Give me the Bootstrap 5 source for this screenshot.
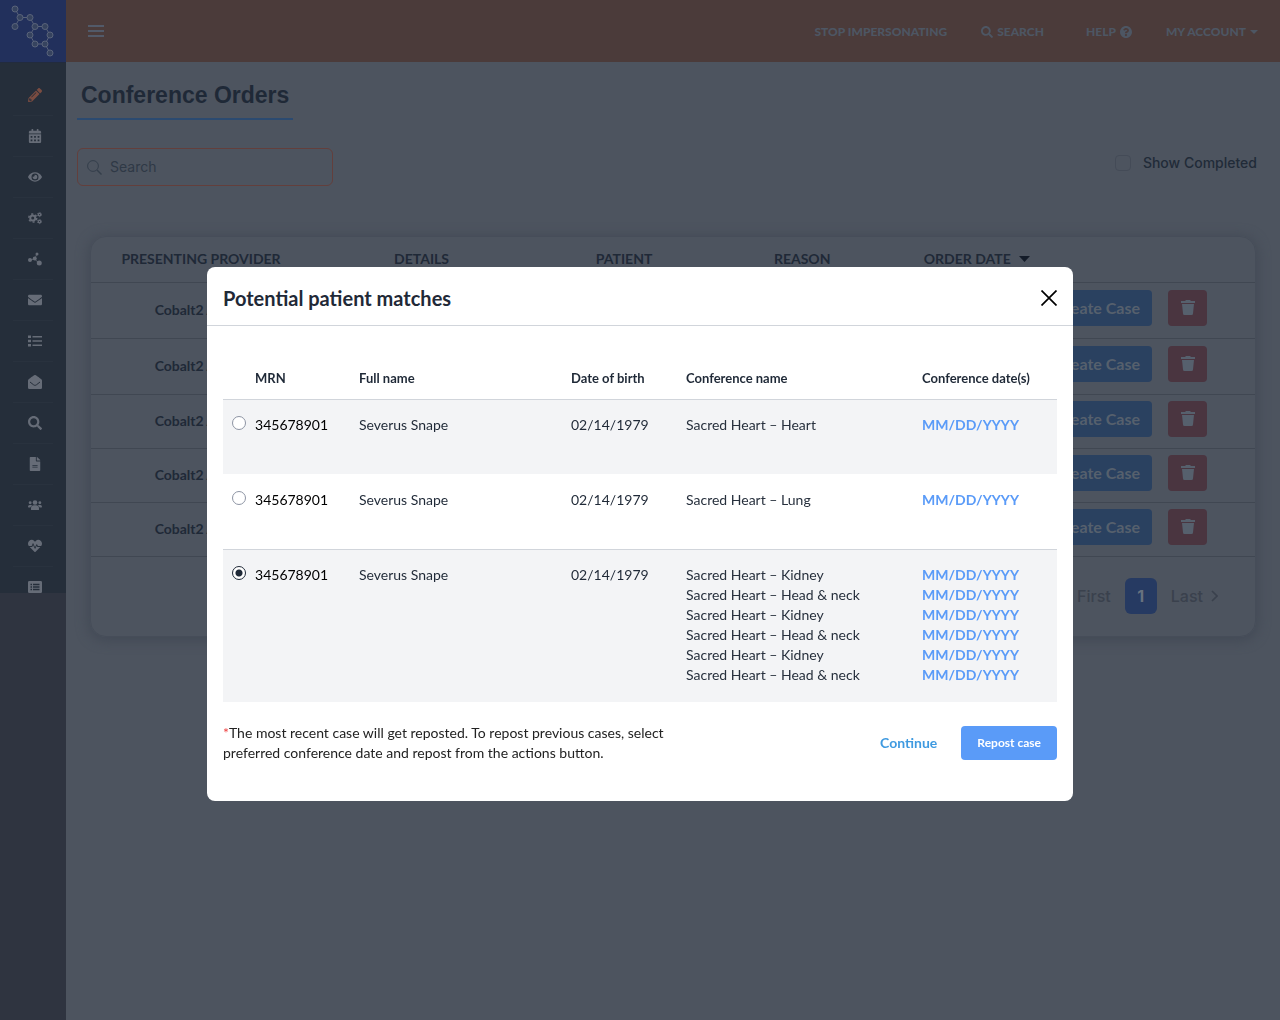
<!DOCTYPE html>
<html lang="en">
<head>
<meta charset="utf-8">
<meta name="viewport" content="width=device-width, initial-scale=1">
<title>Conference Orders</title>
<link rel="stylesheet" href="https://cdn.jsdelivr.net/npm/bootstrap@5.3.0/dist/css/bootstrap.min.css">
<style>
body{font-family:Lato,"Liberation Sans",sans-serif;background:#4d545f;color:#1f2937;font-size:14px;line-height:20px}
a{text-decoration:none}
svg{display:block;flex:none}
.inter{font-family:Inter,"Liberation Sans",sans-serif}
.side{width:66px;flex:none;background:#2f3440}
.brand{height:62px;background:#22305c;display:block}
.side-list{height:531px;overflow:hidden;background:#252e3a;padding:12px 13px 0;margin:0;list-style:none;border-top:1px solid #222b3e}
.side-list li{border-bottom:1px solid #29323e}
.side-list a{height:40px;display:flex;align-items:center;justify-content:center;color:#666c77;padding-left:4px}
.side-list a.on{color:#7a4c41}
.side-list svg{width:14px;height:14px;fill:currentColor}
.topbar{height:62px;background:#4b3b3a;padding:0 22px}
.topbar nav{padding-top:2px;gap:34px}
.topbar a,.topbar button{color:#4d5663;font-size:12px;font-weight:900;line-height:16px}
.topbar button{background:none;border:0;padding:0}
.burger i{display:block;width:16px;height:2px;background:#525a69;margin-bottom:3px}
.burger i:last-child{margin-bottom:0}
.content-area{padding:17px 11px 0}
.page-title{font-family:"Liberation Sans",Arial,sans-serif;font-size:23px;line-height:32px;font-weight:700;color:#1f2937;padding:0 4px 7px;margin:0;border-bottom:2px solid #2b4a70}
.find{width:256px;height:38px;border:1px solid #633f3c;border-radius:6px;padding:0 9px;gap:8px}
.find input{background:none;border:0;outline:0;padding:0;width:190px;font-size:14px;color:#2c3643}
.find input::placeholder{color:#2f3946;opacity:1}
.done input{appearance:none;width:16px;height:16px;border:1px solid #444b57;border-radius:4px;margin:0}
.done{font-weight:500;color:#212b38;gap:12px;margin:5px 12px 0 0}
.orders{border:1px solid #464d59;border-radius:16px;box-shadow:0 2px 12px 2px #434a56;margin:50px 13px 0}
.orders table{width:100%;table-layout:fixed;text-align:center;border-collapse:collapse}
.orders th{font-weight:700;height:45px;padding:0}
.orders td{font-weight:700;height:54px;padding:0}
.orders td:last-child{padding-bottom:4px}
.orders tbody tr:nth-child(-n+2) td{height:56px}
.orders tr{border-bottom:1px solid #404752}
.btn-make,.btn-del{height:36px;border:0;border-radius:4px;background:#2a4160;color:#56606d;font-size:16px;font-weight:700;padding:0 12px;flex:none}
.btn-del{width:39px;background:#4a3540;padding:0 0 2px;display:flex;align-items:center;justify-content:center}
.pager{padding:21px 37px 22px;gap:14px;font-size:16px;font-weight:500}
.pager a{color:#3a414d}
.pager .cur{width:32px;height:36px;border-radius:6px;background:#263a62;color:#68717f;font-weight:700}
.match-box{max-width:866px;margin:267px auto 0}
.match-box .modal-content{border:0;border-radius:8px;background:#fff;color:#1f2937}
.match-box .modal-header{height:59px;padding:3px 16px 0;border-bottom:1px solid #d1d5db}
.match-box h2{font-size:20px;line-height:28px;font-weight:700;margin:0}
.x-btn{background:none;border:0;padding:0}
.match-box .modal-body{padding:0 16px 38px}
.hits{width:100%;table-layout:fixed;margin-top:32px;border-collapse:separate;border-spacing:0}
.hits th{font-size:13px;font-weight:700;height:41px;padding:0 0 2px;vertical-align:middle}
.hits td{padding:15px 0 39px;vertical-align:top;border-top:1px solid #fff}
.hits tr.tint td{background:#f3f4f6;border-top-color:#d1d5db}
.hits tr.last-hit td{padding-bottom:17px}
.hits a{color:#5a9bf8;font-weight:700;display:block}
.hits label{color:#000}
.hits span{display:block;color:#27303d}
.pick{appearance:none;width:14px;height:14px;border:1px solid #8d94a3;border-radius:50%;margin:1px 0 0 9px;display:block;background:#fff}
.pick:checked{border-color:#1f2937;background:radial-gradient(circle,#1f2937 3px,#fff 4px)}
.note{max-width:460px;margin:0;color:#222}
.note b{color:#ef4444;font-weight:400}
.hit-actions{margin-top:21px}
.go-on{color:#3f9ae0;font-weight:700}
.repost{height:34px;border:0;border-radius:4px;background:#5a9bf8;color:#fff;font-size:12px;font-weight:700;padding:0 16px}
</style>
<script src="https://cdn.jsdelivr.net/npm/bootstrap@5.3.0/dist/js/bootstrap.bundle.min.js"></script>
</head>
<body>
<div class="d-flex min-vh-100">
  <aside class="side">
    <a class="brand" href="#" aria-label="Home">
      <svg width="66" height="62" viewBox="0 0 66 62" fill="#36435f" stroke="#59637a"><path fill="none" d="M15 9l5 8.500-5 9M20 17.500h10l5 9h10l5 8.500-5 9H35l-5-9 5-8.500M45 44l5 9"/><circle cx="15" cy="9" r="3"/><circle cx="20" cy="17.500" r="3"/><circle cx="15" cy="26.500" r="3"/><circle cx="30" cy="17.500" r="3"/><circle cx="35" cy="26.500" r="3"/><circle cx="45" cy="26.500" r="3"/><circle cx="30" cy="35" r="3"/><circle cx="50" cy="35" r="3"/><circle cx="35" cy="44" r="3"/><circle cx="45" cy="44" r="3"/><circle cx="50" cy="53" r="3"/></svg>
    </a>
    <ul class="side-list">
      <li><a class="on" href="#" aria-label="Edit"><svg viewBox="0 0 512 512"><path d="M497.900 142.100l-46.100 46.100c-4.700 4.700-12.300 4.700-17 0l-111-111c-4.700-4.700-4.700-12.300 0-17l46.100-46.100c18.700-18.700 49.100-18.700 67.900 0l60.100 60.100c18.800 18.700 18.800 49.100 0 67.900zM284.200 99.800L21.600 362.400.4 483.900c-2.900 16.400 11.400 30.600 27.800 27.800l121.500-21.300 262.600-262.600c4.700-4.700 4.700-12.300 0-17l-111-111c-4.800-4.700-12.400-4.700-17.100 0zM124.100 339.900c-5.500-5.500-5.500-14.300 0-19.800l154-154c5.500-5.500 14.300-5.500 19.800 0s5.500 14.300 0 19.800l-154 154c-5.500 5.500-14.300 5.500-19.800 0zM88 424h48v36.300l-64.500 11.300-31.100-31.100L51.700 376H88v48z"/></svg></a></li>
      <li><a href="#" aria-label="Calendar"><svg viewBox="0 0 448 512"><path fill-rule="evenodd" d="M0 464c0 26.500 21.500 48 48 48h352c26.500 0 48-21.500 48-48V192H0v272zM64 256h64v64H64zM192 256h64v64h-64zM320 256h64v64h-64zM64 384h64v64H64zM192 384h64v64h-64zM320 384h64v64h-64zM400 64h-48V16c0-8.800-7.200-16-16-16h-32c-8.800 0-16 7.200-16 16v48H160V16c0-8.800-7.200-16-16-16h-32c-8.800 0-16 7.200-16 16v48H48C21.500 64 0 85.500 0 112v48h448v-48c0-26.500-21.500-48-48-48z"/></svg></a></li>
      <li><a href="#" aria-label="View"><svg viewBox="0 0 576 512"><path d="M572.520 241.400C518.290 135.590 410.930 64 288 64S57.680 135.640 3.480 241.410a32.350 32.350 0 0 0 0 29.190C57.710 376.410 165.070 448 288 448s230.320-71.640 284.520-177.410a32.350 32.350 0 0 0 0-29.190zM288 400a144 144 0 1 1 144-144 143.930 143.930 0 0 1-144 144zm0-240a95.310 95.310 0 0 0-25.310 3.790 47.850 47.850 0 0 1-66.900 66.900A95.780 95.780 0 1 0 288 160z"/></svg></a></li>
      <li><a href="#" aria-label="Settings"><svg viewBox="0 0 28 28"><g fill="none" stroke="currentColor"><circle cx="9.500" cy="14" r="5" stroke-width="4"/><circle cx="9.500" cy="14" r="8" stroke-width="3" stroke-dasharray="4.200 4.180"/><circle cx="23" cy="7" r="2.500" stroke-width="2.500"/><circle cx="23" cy="7" r="4.300" stroke-width="1.600" stroke-dasharray="2.400 2.100"/><circle cx="23" cy="21" r="2.500" stroke-width="2.500"/><circle cx="23" cy="21" r="4.300" stroke-width="1.600" stroke-dasharray="2.400 2.100"/></g></svg></a></li>
      <li><a href="#" aria-label="Network"><svg viewBox="0 0 28 28"><path fill="none" stroke="currentColor" stroke-width="1.500" d="M4 16l9-2 5-10M13 14l9 8"/><circle cx="4" cy="16" r="4"/><circle cx="13.500" cy="13" r="4"/><circle cx="18" cy="4" r="3"/><circle cx="22.500" cy="22" r="5"/></svg></a></li>
      <li><a href="#" aria-label="Messages"><svg viewBox="0 0 512 512"><path d="M502.300 190.800c3.900-3.100 9.700-.2 9.700 4.700V400c0 26.500-21.500 48-48 48H48c-26.500 0-48-21.500-48-48V195.600c0-5 5.700-7.800 9.700-4.700 22.400 17.400 52.100 39.500 154.100 113.600 21.100 15.400 56.700 47.800 92.200 47.600 35.700.3 72-32.800 92.300-47.600 102-74.100 131.600-96.300 154-113.700zM256 320c23.200.4 56.600-29.200 73.400-41.400 132.700-96.300 142.800-104.700 173.400-128.700 5.800-4.500 9.200-11.500 9.200-18.900v-19c0-26.500-21.500-48-48-48H48c-26.500 0-48 21.500-48 48v19c0 7.400 3.400 14.300 9.200 18.900 30.600 23.900 40.700 32.400 173.400 128.700 16.800 12.200 50.200 41.800 73.400 41.400z"/></svg></a></li>
      <li><a href="#" aria-label="List"><svg viewBox="0 0 28 28"><path d="M0 3h6v5H0zM0 11.500h6v5H0zM0 20h6v5H0zM9 4h19v3H9zM9 12.500h19v3H9zM9 21h19v3H9z"/></svg></a></li>
      <li><a href="#" aria-label="Inbox"><svg viewBox="0 0 28 28"><path d="M14 0c2 0 4 2 12 8 1.500 1 2 2 2 3v14.500a2.500 2.500 0 0 1-2.500 2.500h-23A2.500 2.500 0 0 1 0 25.500V11c0-1 .5-2 2-3C10 2 12 0 14 0z"/><path d="M4 14l7 5.500c2 1.500 4 1.500 6 0l7-5.500" fill="none" stroke="#252e3a" stroke-width="2"/></svg></a></li>
      <li><a href="#" aria-label="Search"><svg viewBox="0 0 512 512"><path d="M505 442.700L405.300 343c-4.500-4.500-10.600-7-17-7H372c27.600-35.300 44-79.700 44-128C416 93.100 322.900 0 208 0S0 93.100 0 208s93.100 208 208 208c48.300 0 92.700-16.400 128-44v16.300c0 6.400 2.500 12.500 7 17l99.700 99.700c9.400 9.400 24.600 9.400 33.900 0l28.300-28.300c9.400-9.400 9.400-24.600.1-34zM208 336c-70.700 0-128-57.200-128-128 0-70.700 57.200-128 128-128 70.700 0 128 57.200 128 128 0 70.700-57.200 128-128 128z"/></svg></a></li>
      <li><a href="#" aria-label="Documents"><svg viewBox="0 0 384 512"><path d="M224 136V0H24C10.700 0 0 10.700 0 24v464c0 13.300 10.700 24 24 24h336c13.300 0 24-10.700 24-24V160H248c-13.200 0-24-10.800-24-24zm64 236c0 6.600-5.400 12-12 12H108c-6.600 0-12-5.400-12-12v-8c0-6.600 5.400-12 12-12h168c6.600 0 12 5.400 12 12v8zm0-64c0 6.600-5.400 12-12 12H108c-6.600 0-12-5.400-12-12v-8c0-6.600 5.400-12 12-12h168c6.600 0 12 5.400 12 12v8zM384 121.900v6.100H256V0h6.100c6.400 0 12.500 2.500 17 7l97.900 98c4.500 4.500 7 10.600 7 16.900z"/></svg></a></li>
      <li><a href="#" aria-label="Users"><svg viewBox="0 0 28 28"><circle cx="14" cy="9" r="4.600"/><circle cx="4.300" cy="9.500" r="2.900"/><circle cx="23.700" cy="9.500" r="2.900"/><path d="M6 23v-2.500c0-3.500 2.500-6 6-6h4c3.500 0 6 2.500 6 6V23a1 1 0 0 1-1 1H7a1 1 0 0 1-1-1zM0 18c0-2.500 1.200-4 3.500-4H6c1 0 1.500.3 2 .8A8 8 0 0 0 4.600 19H1zM28 18c0-2.500-1.200-4-3.500-4H22c-1 0-1.500.3-2 .8a8 8 0 0 1 3.400 4.200H27z"/></svg></a></li>
      <li><a href="#" aria-label="Health"><svg viewBox="0 0 512 512"><path d="M320.200 243.800l-49.700 99.400c-6 12.100-23.400 11.700-28.900-.6l-56.900-126.300-30 71.700H60.600l182.500 186.500c7.100 7.300 18.600 7.300 25.700 0L451.400 288H342.300l-22.100-44.200zM473.700 73.900l-2.400-2.500c-51.500-52.600-135.800-52.600-187.400 0L256 100l-27.900-28.500c-51.500-52.700-135.900-52.700-187.400 0l-2.400 2.400C-10.400 123.700-12.500 203 31 256h102.400l35.900-86.200c5.400-12.900 23.600-13.200 29.400-.4l58.200 129.300 49-97.900c5.900-11.800 22.700-11.800 28.600 0l27.600 55.200H481c43.500-53 41.400-132.300-7.300-182.100z"/></svg></a></li>
      <li><a href="#" aria-label="Reports"><svg viewBox="0 0 28 28"><path fill-rule="evenodd" d="M2.500 2h23A2.500 2.500 0 0 1 28 4.500v19a2.500 2.500 0 0 1-2.500 2.500h-23A2.500 2.500 0 0 1 0 23.500v-19A2.500 2.500 0 0 1 2.500 2zM5 7.500v3h3v-3zM10 7.500v3h13v-3zM5 12.500v3h3v-3zM10 12.500v3h13v-3zM5 17.500v3h3v-3zM10 17.500v3h13v-3z"/></svg></a></li>
    </ul>
  </aside>

  <div class="flex-grow-1">
    <header class="topbar d-flex align-items-center justify-content-between">
      <button class="burger" aria-label="Menu"><i></i><i></i><i></i></button>
      <nav class="d-flex align-items-center">
        <a href="#">STOP IMPERSONATING</a>
        <a href="#" class="d-flex align-items-center gap-1"><svg width="12" height="12" viewBox="0 0 512 512" fill="currentColor"><path d="M505 442.700L405.300 343c-4.500-4.500-10.600-7-17-7H372c27.600-35.300 44-79.700 44-128C416 93.100 322.900 0 208 0S0 93.100 0 208s93.100 208 208 208c48.300 0 92.700-16.400 128-44v16.300c0 6.400 2.500 12.500 7 17l99.700 99.700c9.400 9.400 24.600 9.400 33.900 0l28.300-28.300c9.400-9.400 9.400-24.600.1-34zM208 336c-70.700 0-128-57.200-128-128 0-70.700 57.200-128 128-128 70.700 0 128 57.200 128 128 0 70.700-57.200 128-128 128z"/></svg>SEARCH</a>
        <a href="#" class="d-flex align-items-center gap-1 ps-2">HELP<svg width="12" height="12" viewBox="8 8 496 496" fill="currentColor"><path d="M504 256c0 136.997-111.043 248-248 248S8 392.997 8 256C8 119.083 119.043 8 256 8s248 111.083 248 248zM262.655 90c-54.497 0-89.255 22.957-116.549 63.758-3.536 5.286-2.353 12.415 2.715 16.258l34.699 26.310c5.205 3.947 12.621 3.008 16.665-2.122 17.864-22.658 30.113-35.797 57.303-35.797 20.429 0 45.698 13.148 45.698 32.958 0 14.976-12.363 22.667-32.534 33.976C247.128 238.528 216 254.941 216 296v4c0 6.627 5.373 12 12 12h56c6.627 0 12-5.373 12-12v-1.333c0-28.462 83.186-29.647 83.186-106.667 0-58.002-60.165-102-116.531-102zM256 338c-25.365 0-46 20.635-46 46 0 25.364 20.635 46 46 46s46-20.636 46-46c0-25.365-20.635-46-46-46z"/></svg></a>
        <button class="d-flex align-items-center gap-1">MY ACCOUNT<svg width="8" height="4" viewBox="0 0 8 4" fill="currentColor"><path d="M0 0h8L4 4z"/></svg></button>
      </nav>
    </header>

    <main class="content-area">
      <div class="d-flex"><h1 class="page-title">Conference Orders</h1></div>
      <div class="d-flex justify-content-between align-items-start pt-4 mt-1">
        <div class="find d-flex align-items-center inter">
          <svg width="15" height="15" viewBox="0 0 15 15" fill="none" stroke="#343e4b"><circle cx="6" cy="6" r="5.400"/><path d="M10 10l4.500 4.500" stroke-width="1.400"/></svg>
          <input type="search" placeholder="Search" aria-label="Search">
        </div>
        <label class="done inter d-flex align-items-center"><input type="checkbox">Show Completed</label>
      </div>
      <section class="orders">
        <table>
          <colgroup><col style="width:18.900%"><col style="width:19%"><col style="width:15.800%"><col style="width:14.800%"><col style="width:15.200%"><col></colgroup>
          <thead><tr><th>PRESENTING PROVIDER</th><th>DETAILS</th><th>PATIENT</th><th>REASON</th><th><span class="d-inline-flex align-items-center gap-2">ORDER DATE<svg width="11" height="6" viewBox="0 0 11 6" fill="#141c29"><path d="M0 0h11L5.500 6z"/></svg></span></th><th></th></tr></thead>
          <tbody id="orderRows"></tbody>
        </table>
        <nav class="pager d-flex align-items-center justify-content-end inter" aria-label="Pages">
          <a href="#">First</a><a href="#" class="cur d-flex align-items-center justify-content-center">1</a>
          <a href="#" class="d-flex align-items-center gap-2">Last<svg width="7" height="12" viewBox="0 0 7 12" fill="none" stroke="currentColor" stroke-width="1.600"><path d="M1 1l5 5-5 5"/></svg></a>
        </nav>
      </section>
    </main>
  </div>
</div>

<div class="modal d-block" role="dialog" aria-labelledby="matchTitle">
  <div class="modal-dialog match-box">
    <div class="modal-content">
      <div class="modal-header">
        <h2 id="matchTitle">Potential patient matches</h2>
        <button class="x-btn" aria-label="Close"><svg width="16" height="16" viewBox="0 0 16 16" fill="none" stroke="#000" stroke-width="1.700"><path d="M.5 .5l15 15M15.500 .5l-15 15"/></svg></button>
      </div>
      <div class="modal-body">
        <table class="hits">
          <colgroup><col style="width:3.840%"><col style="width:12.470%"><col style="width:25.420%"><col style="width:13.790%"><col style="width:28.300%"><col></colgroup>
          <thead><tr><th></th><th>MRN</th><th>Full name</th><th>Date of birth</th><th>Conference name</th><th>Conference date(s)</th></tr></thead>
          <tbody>
            <tr class="tint"><td><input class="pick" type="radio" name="hit" id="h1"></td><td><label for="h1">345678901</label></td><td>Severus Snape</td><td>02/14/1979</td><td><span>Sacred Heart – Heart</span></td><td><a href="#">MM/DD/YYYY</a></td></tr>
            <tr><td><input class="pick" type="radio" name="hit" id="h2"></td><td><label for="h2">345678901</label></td><td>Severus Snape</td><td>02/14/1979</td><td><span>Sacred Heart – Lung</span></td><td><a href="#">MM/DD/YYYY</a></td></tr>
            <tr class="tint last-hit"><td><input class="pick" type="radio" name="hit" id="h3" checked></td><td><label for="h3">345678901</label></td><td>Severus Snape</td><td>02/14/1979</td>
              <td><span>Sacred Heart – Kidney</span><span>Sacred Heart – Head &amp; neck</span><span>Sacred Heart – Kidney</span><span>Sacred Heart – Head &amp; neck</span><span>Sacred Heart – Kidney</span><span>Sacred Heart – Head &amp; neck</span></td>
              <td><a href="#">MM/DD/YYYY</a><a href="#">MM/DD/YYYY</a><a href="#">MM/DD/YYYY</a><a href="#">MM/DD/YYYY</a><a href="#">MM/DD/YYYY</a><a href="#">MM/DD/YYYY</a></td></tr>
          </tbody>
        </table>
        <div class="hit-actions d-flex justify-content-between align-items-center">
          <p class="note"><b>*</b>The most recent case will get reposted. To repost previous cases, select preferred conference date and repost from the actions button.</p>
          <div class="d-flex align-items-center gap-4"><a href="#" class="go-on">Continue</a><button class="repost">Repost case</button></div>
        </div>
      </div>
    </div>
  </div>
</div>
<script>
document.getElementById('orderRows').innerHTML = Array.from({length:5}, () =>
  `<tr><td>Cobalt2 Admin</td><td></td><td></td><td></td><td></td><td><div class="d-flex justify-content-end gap-3 pe-5 text-nowrap"><button class="btn-make">Create Case</button><button class="btn-del" aria-label="Delete"><svg width="14" height="15" viewBox="0 0 14 15" fill="currentColor"><path d="M5 0h4l1 1h4v2H0V1h4zM1 4h12l-1 9.500A1.500 1.500 0 0 1 10.500 15h-7A1.500 1.500 0 0 1 2 13.500z"/></svg></button></div></td></tr>`).join('');
</script>
</body>
</html>
